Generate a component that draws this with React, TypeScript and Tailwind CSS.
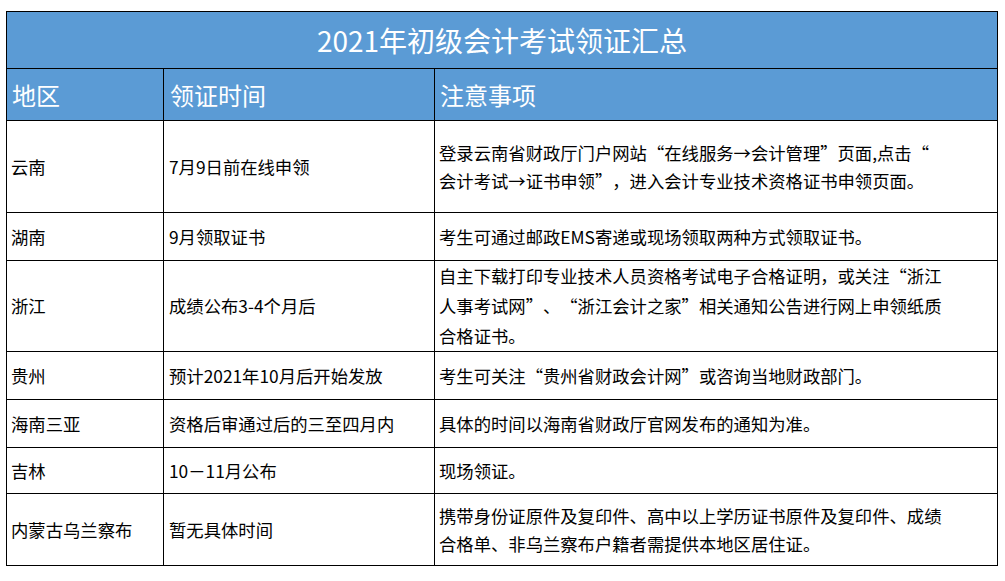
import React from "react";

const rows: { region: string; time: string; note: React.ReactNode; h: string; lh?: string }[] = [
  {
    region: "云南",
    time: "7月9日前在线申领",
    note: (
      <>
        登录云南省财政厅门户网站“在线服务→会计管理”页面,点击“
        <br />
        会计考试→证书申领”，进入会计专业技术资格证书申领页面。
      </>
    ),
    h: "h-[92px]",
  },
  { region: "湖南", time: "9月领取证书", note: "考生可通过邮政EMS寄递或现场领取两种方式领取证书。", h: "h-[48px]" },
  {
    region: "浙江",
    time: "成绩公布3-4个月后",
    note: (
      <>
        自主下载打印专业技术人员资格考试电子合格证明，或关注“浙江
        <br />
        人事考试网”、“浙江会计之家”相关通知公告进行网上申领纸质
        <br />
        合格证书。
      </>
    ),
    h: "h-[90px]",
    lh: "leading-[30px]",
  },
  { region: "贵州", time: "预计2021年10月后开始发放", note: "考生可关注“贵州省财政会计网”或咨询当地财政部门。", h: "h-[48px]" },
  { region: "海南三亚", time: "资格后审通过后的三至四月内", note: "具体的时间以海南省财政厅官网发布的通知为准。", h: "h-[48px]" },
  { region: "吉林", time: "10－11月公布", note: "现场领证。", h: "h-[46px]" },
  {
    region: "内蒙古乌兰察布",
    time: "暂无具体时间",
    note: (
      <>
        携带身份证原件及复印件、高中以上学历证书原件及复印件、成绩
        <br />
        合格单、非乌兰察布户籍者需提供本地区居住证。
      </>
    ),
    h: "h-[72px]",
  },
];

export default function App() {
  return (
    <div
      className="w-[1005px] h-[581px] bg-white pt-[11px] pl-[6px] [text-spacing-trim:space-all]"
      style={{ fontFamily: '"Noto Sans CJK SC", "Noto Sans", sans-serif' }}
    >
      <table className="table-fixed border-collapse w-[991px] text-black">
        <colgroup>
          <col className="w-[157px]" />
          <col className="w-[271px]" />
          <col className="w-[563px]" />
        </colgroup>
        <tbody>
          <tr className="h-[57px] bg-[#5b9bd5]">
            <td colSpan={3} className="border border-black text-center text-white text-[28px] leading-none p-0">
              2021年初级会计考试领证汇总
            </td>
          </tr>
          <tr className="h-[52px] bg-[#5b9bd5] text-white text-[24px] leading-none">
            <td className="border border-black pl-[5px]">地区</td>
            <td className="border border-black pl-[6px]">领证时间</td>
            <td className="border border-black pl-[5px]">注意事项</td>
          </tr>
          {rows.map((r) => (
            <tr key={r.region} className={`${r.h} text-[13pt] ${r.lh ?? "leading-[28px]"}`}>
              <td className="border border-black pl-[4px] whitespace-nowrap">{r.region}</td>
              <td className="border border-black pl-[5px] whitespace-nowrap">{r.time}</td>
              <td className="border border-black pl-[4px] whitespace-nowrap">{r.note}</td>
            </tr>
          ))}
        </tbody>
      </table>
    </div>
  );
}
